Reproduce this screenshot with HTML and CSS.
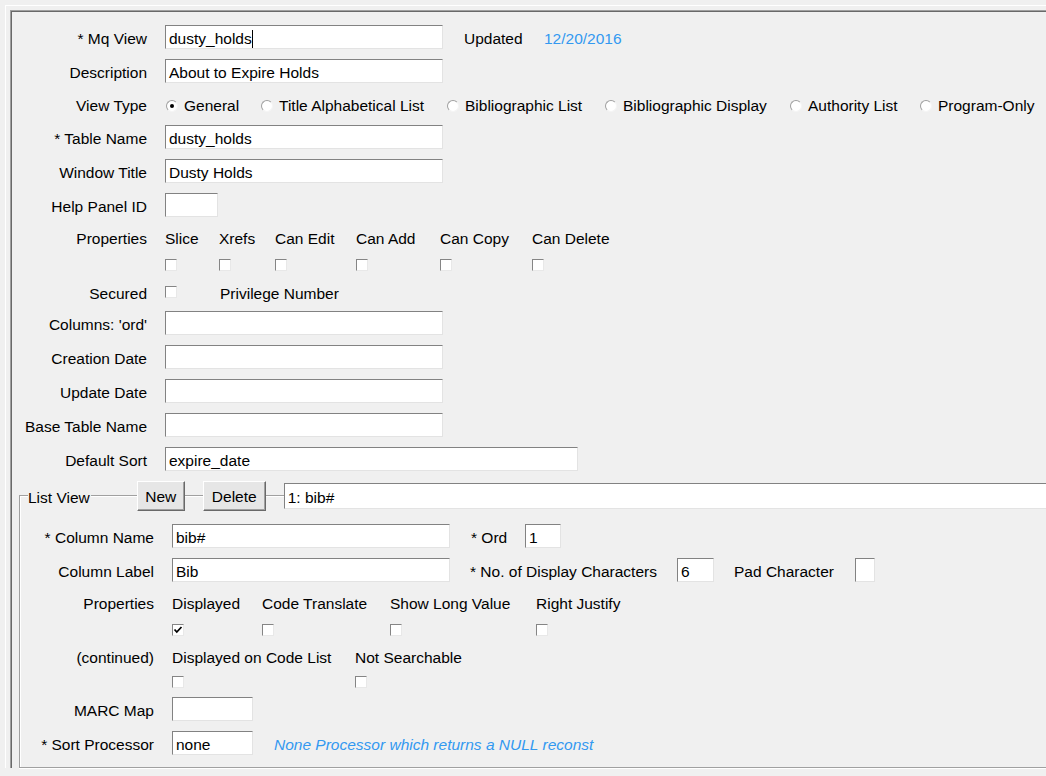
FILE: index.html
```html
<!DOCTYPE html>
<html>
<head>
<meta charset="utf-8">
<link rel="stylesheet" href="styles.css">
</head>
<body>
<div class="page">
  <div class="frame">
    <div class="row h34">
      <span class="lbl">* Mq View</span>
      <div class="field w278"><span class="caret">dusty_holds</span></div>
      <span class="txt upd">Updated</span>
      <span class="txt date">12/20/2016</span>
    </div>
    <div class="row h34">
      <span class="lbl">Description</span>
      <div class="field w278">About to Expire Holds</div>
    </div>
    <div class="row h32">
      <span class="lbl">View Type</span>
      <div class="radios">
        <span class="radio r1"><i class="dot on"></i>General</span>
        <span class="radio r2"><i class="dot"></i>Title Alphabetical List</span>
        <span class="radio r3"><i class="dot"></i>Bibliographic List</span>
        <span class="radio r4"><i class="dot"></i>Bibliographic Display</span>
        <span class="radio r5"><i class="dot"></i>Authority List</span>
        <span class="radio"><i class="dot"></i>Program-Only</span>
      </div>
    </div>
    <div class="row h34">
      <span class="lbl">* Table Name</span>
      <div class="field w278">dusty_holds</div>
    </div>
    <div class="row h34">
      <span class="lbl">Window Title</span>
      <div class="field w278">Dusty Holds</div>
    </div>
    <div class="row h34">
      <span class="lbl">Help Panel ID</span>
      <div class="field w53"></div>
    </div>
    <div class="props">
      <span class="lbl plbl t30">Properties</span>
      <div class="opts">
        <div class="opt c54"><span class="t30">Slice</span><span class="cbcell b26"><i class="cb"></i></span></div>
        <div class="opt c56"><span class="t30">Xrefs</span><span class="cbcell b26"><i class="cb"></i></span></div>
        <div class="opt c81"><span class="t30">Can Edit</span><span class="cbcell b26"><i class="cb"></i></span></div>
        <div class="opt c84"><span class="t30">Can Add</span><span class="cbcell b26"><i class="cb"></i></span></div>
        <div class="opt c92"><span class="t30">Can Copy</span><span class="cbcell b26"><i class="cb"></i></span></div>
        <div class="opt"><span class="t30">Can Delete</span><span class="cbcell b26"><i class="cb"></i></span></div>
      </div>
    </div>
    <div class="row h28">
      <span class="lbl">Secured</span>
      <span class="cbcell c55"><i class="cb"></i></span>
      <span class="txt">Privilege Number</span>
    </div>
    <div class="row h34">
      <span class="lbl">Columns: 'ord'</span>
      <div class="field w278"></div>
    </div>
    <div class="row h34">
      <span class="lbl">Creation Date</span>
      <div class="field w278"></div>
    </div>
    <div class="row h34">
      <span class="lbl">Update Date</span>
      <div class="field w278"></div>
    </div>
    <div class="row h34">
      <span class="lbl">Base Table Name</span>
      <div class="field w278"></div>
    </div>
    <div class="row h34">
      <span class="lbl">Default Sort</span>
      <div class="field w413">expire_date</div>
    </div>

    <div class="listbox">
      <div class="lv-head">
        <span class="txt legend">List View</span>
        <span class="btn new">New</span>
        <span class="btn del">Delete</span>
        <div class="field lvsel">1: bib#</div>
      </div>
      <div class="row h34 first">
        <span class="lbl">* Column Name</span>
        <div class="field w278">bib#</div>
        <span class="txt il ord-l">* Ord</span>
        <div class="field w36">1</div>
      </div>
      <div class="row h34">
        <span class="lbl">Column Label</span>
        <div class="field w278">Bib</div>
        <span class="txt il nod-l">* No. of Display Characters</span>
        <div class="field w37">6</div>
        <span class="txt il pad-l">Pad Character</span>
        <div class="field w20"></div>
      </div>
      <div class="props">
        <span class="lbl plbl t30">Properties</span>
        <div class="opts">
          <div class="opt c90"><span class="t30">Displayed</span><span class="cbcell b26"><i class="cb on"><svg viewBox="0 0 10 10" width="10" height="10"><polyline points="1.5,4.5 3.8,7 8.5,2" fill="none" stroke="#000" stroke-width="1.8"/></svg></i></span></div>
          <div class="opt c128"><span class="t30">Code Translate</span><span class="cbcell b26"><i class="cb"></i></span></div>
          <div class="opt c146"><span class="t30">Show Long Value</span><span class="cbcell b26"><i class="cb"></i></span></div>
          <div class="opt"><span class="t30">Right Justify</span><span class="cbcell b26"><i class="cb"></i></span></div>
        </div>
      </div>
      <div class="props">
        <span class="lbl plbl t26">(continued)</span>
        <div class="opts">
          <div class="opt c183"><span class="t26">Displayed on Code List</span><span class="cbcell b26"><i class="cb"></i></span></div>
          <div class="opt"><span class="t26">Not Searchable</span><span class="cbcell b26"><i class="cb"></i></span></div>
        </div>
      </div>
      <div class="row h28">
        <span class="lbl">MARC Map</span>
        <div class="field w81"></div>
      </div>
      <div class="row h40">
        <span class="lbl">* Sort Processor</span>
        <div class="field w81">none</div>
        <span class="txt note">None Processor which returns a NULL reconst</span>
      </div>
    </div>
  </div>
</div>
</body>
</html>
```
FILE: styles.css
```css
html, body {
  margin: 0;
  padding: 0;
  overflow: hidden;
  background: #f0f0f0;
}
body {
  width: 1046px;
  height: 776px;
  font-family: "Liberation Sans", Arial, sans-serif;
  font-size: 15.5px;
  color: #000;
}
.page {
  margin: 5px 0 0 5px;
  border-left: 1px solid #fff;
  border-top: 1px solid #fff;
  padding: 4px 0 0 4px;
}
.frame {
  border-left: 1px solid #a0a0a0;
  border-top: 1px solid #a0a0a0;
  box-shadow: inset 1px 1px 0 #696969;
  padding: 9px 0 0 1px;
}
.row {
  display: flex;
  align-items: center;
  white-space: nowrap;
}
.h26 { height: 26px; }
.h28 { height: 28px; }
.h32 { height: 32px; }
.h34 { height: 34px; }
.h40 { height: 40px; }
.txt { padding-top: 3px; }
.lbl {
  box-sizing: border-box;
  flex: none;
  width: 135px;
  margin-right: 18px;
  padding-top: 3px;
  text-align: right;
  white-space: nowrap;
}
.listbox .lbl { width: 134px; }
.field {
  box-sizing: border-box;
  flex: none;
  height: 24px;
  border: 1px solid;
  border-color: #828282 #e3e3e3 #e3e3e3 #828282;
  background: #fff;
  padding: 3px 0 0 3px;
  display: flex;
  align-items: center;
  white-space: nowrap;
  overflow: hidden;
}
.w20 { width: 20px; }
.w36 { width: 36px; }
.w37 { width: 37px; }
.w53 { width: 53px; }
.w81 { width: 81px; }
.w278 { width: 278px; }
.w413 { width: 413px; }
.caret {
  border-right: 1px solid #000;
  line-height: 18px;
}
.upd {
  margin-left: 21px;
  width: 80px;
}
.date { color: #3399f0; }
.radios {
  display: flex;
  align-items: center;
  margin-left: 1px;
  padding-top: 3px;
}
.radio {
  display: flex;
  align-items: center;
  gap: 6px;
  white-space: nowrap;
}
.r1 { width: 95px; }
.r2 { width: 186px; }
.r3 { width: 158px; }
.r4 { width: 185px; }
.r5 { width: 130px; }
.dot {
  box-sizing: border-box;
  width: 12px;
  height: 12px;
  border-radius: 50%;
  border: 1px solid;
  border-color: #a0a0a0 #f4f4f4 #f4f4f4 #a0a0a0;
  background: #fff;
  display: flex;
  align-items: center;
  justify-content: center;
}
.dot.on::after {
  content: "";
  width: 4px;
  height: 4px;
  border-radius: 50%;
  background: #000;
}
.props {
  display: flex;
  align-items: flex-start;
}
.plbl { display: flex; align-items: center; justify-content: flex-end; }
.t30 {
  box-sizing: border-box;
  height: 30px;
  padding-top: 3px;
  display: flex;
  align-items: center;
  white-space: nowrap;
}
.t26 {
  box-sizing: border-box;
  height: 26px;
  padding-top: 3px;
  display: flex;
  align-items: center;
  white-space: nowrap;
}
.b26 { height: 26px; }
.opts { display: flex; }
.opt {
  display: flex;
  flex-direction: column;
  flex: none;
}
.c54 { width: 54px; }
.c55 { width: 55px; }
.c56 { width: 56px; }
.c81 { width: 81px; }
.c84 { width: 84px; }
.c90 { width: 90px; }
.c92 { width: 92px; }
.c128 { width: 128px; }
.c146 { width: 146px; }
.c183 { width: 183px; }
.cbcell {
  display: flex;
  align-items: center;
  flex: none;
}
.cb {
  box-sizing: border-box;
  width: 12px;
  height: 12px;
  border: 1px solid;
  border-color: #858585 #e8e8e8 #e8e8e8 #858585;
  background: #fff;
  display: flex;
  align-items: center;
  justify-content: center;
}
.cb svg { display: block; }
.listbox {
  margin: 19px 0 0 7px;
  border: 1px solid #a0a0a0;
  border-right: none;
  box-shadow: inset 1px 1px 0 #fff, 0 1px 0 #fff;
  padding-bottom: 4px;
}
.lv-head {
  display: flex;
  align-items: center;
  height: 30px;
  margin-top: -15px;
  padding-left: 8px;
  white-space: nowrap;
}
.legend {
  background: #f0f0f0;
  padding-right: 1px;
}
.btn {
  box-sizing: border-box;
  flex: none;
  height: 30px;
  padding-top: 2px;
  background: #e6e6e6;
  border: 1px solid;
  border-color: #fff #696969 #696969 #fff;
  box-shadow: inset -1px -1px 0 #a0a0a0;
  display: flex;
  align-items: center;
  justify-content: center;
}
.new { width: 48px; margin-left: 46px; }
.del { width: 63px; margin-left: 18px; }
.lvsel {
  flex: 1;
  height: 26px;
  margin-left: 18px;
  border-right: none;
}
.first { margin-top: 8px; }
.il { flex: none; white-space: nowrap; }
.ord-l { margin-left: 21px; width: 54px; }
.nod-l { margin-left: 20px; width: 207px; }
.pad-l { margin-left: 20px; width: 121px; }
.note {
  margin-left: 21px;
  color: #3399f0;
  font-style: italic;
}
```
